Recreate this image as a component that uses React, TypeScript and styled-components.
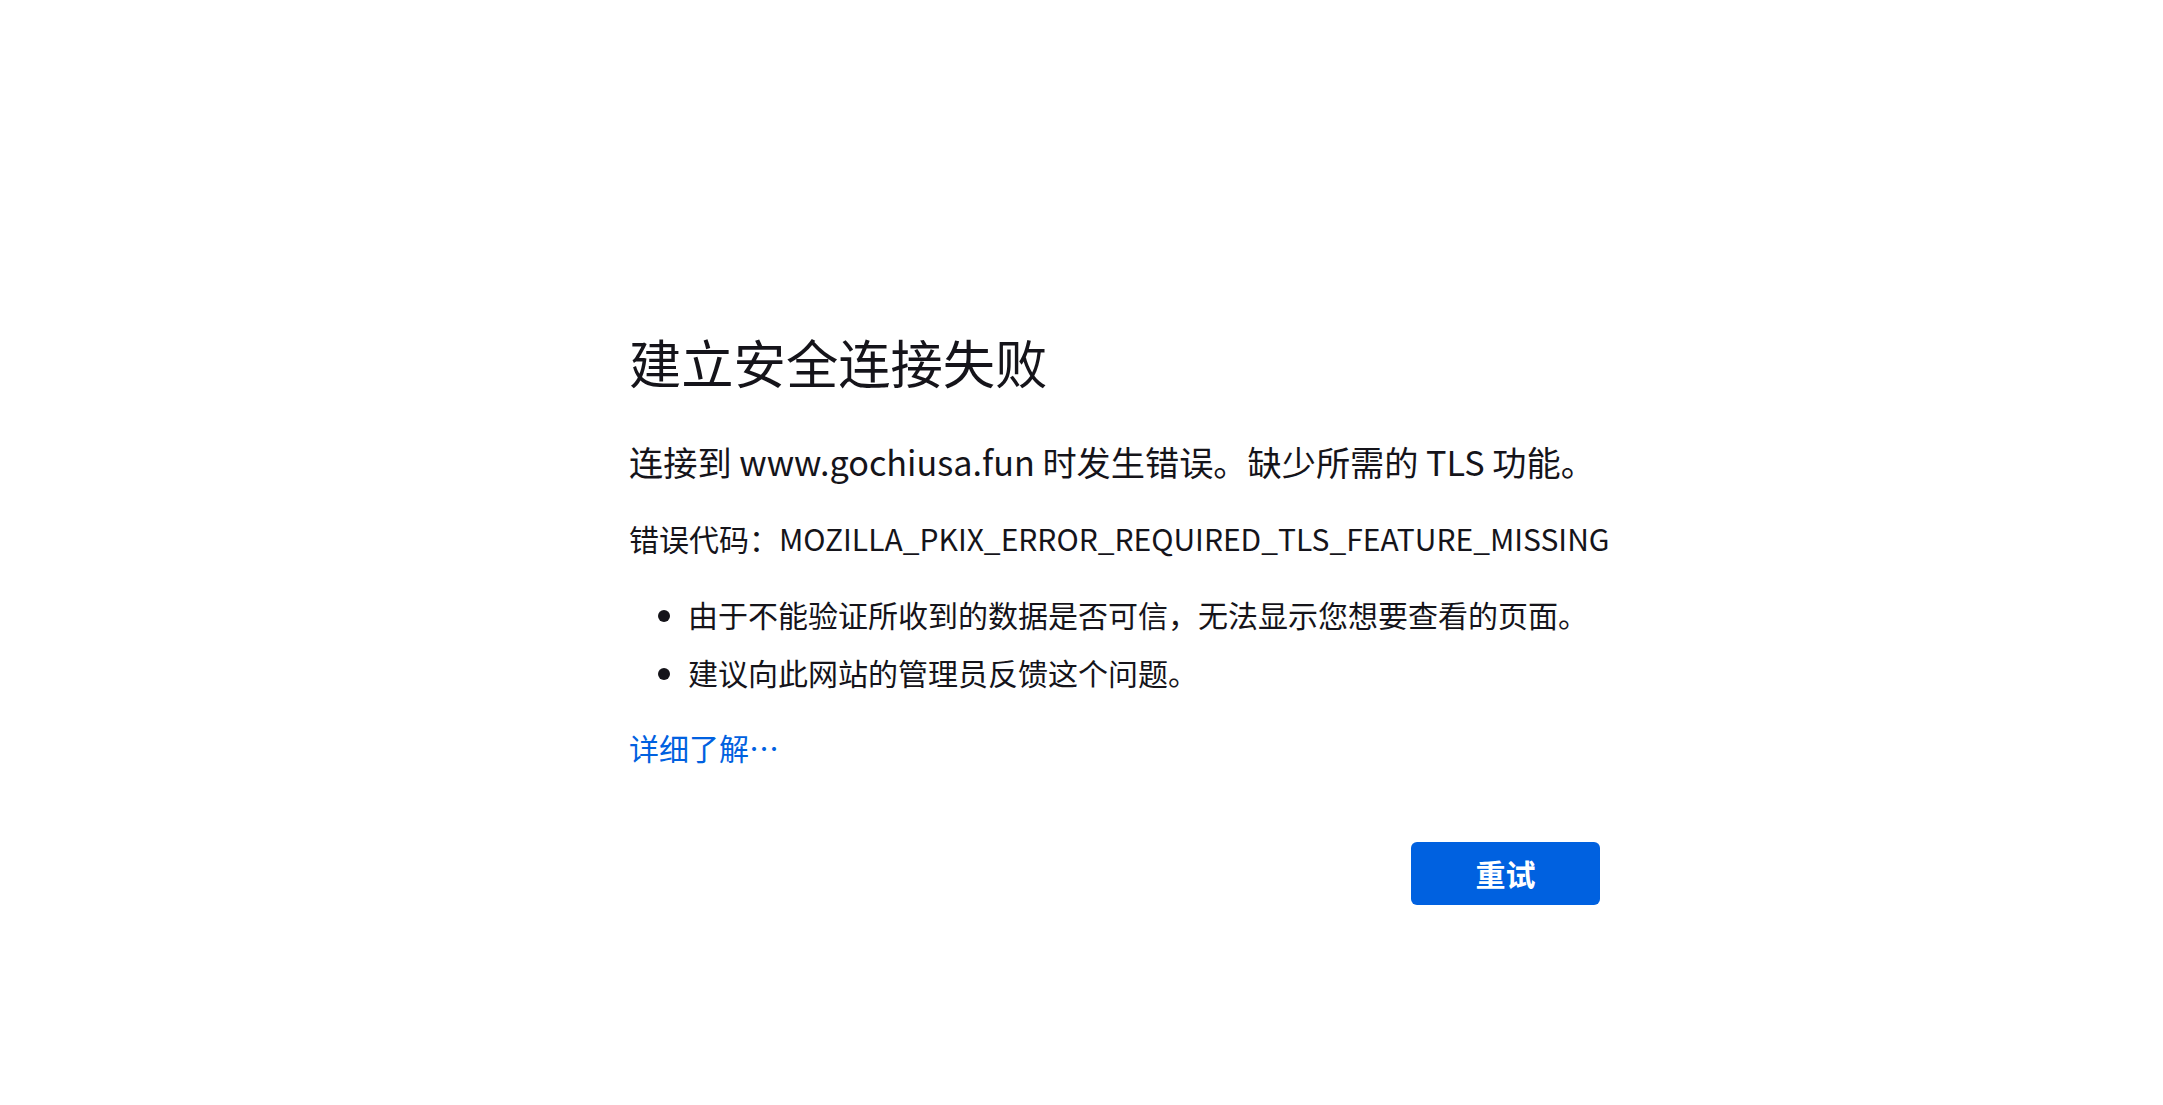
import React from "react";
import styled, { createGlobalStyle } from "styled-components";

const Global = createGlobalStyle`
  html, body {
    margin: 0;
    padding: 0;
    background: #ffffff;
  }
  body {
    font-family: "Noto Sans CJK SC", "Noto Sans", sans-serif;
    color: #15141a;
  }
`;

const Page = styled.div`
  display: flex;
  justify-content: center;
  padding-top: 330px;
  min-height: 1105px;
  box-sizing: border-box;
`;

const Container = styled.main`
  width: 1037px;
  padding-left: 66px;
  box-sizing: border-box;
  display: flex;
  flex-direction: column;
`;

const Title = styled.h1`
  margin: 0;
  font-size: 52.3px;
  line-height: 62px;
  font-weight: 400;
  color: #15141a;
`;

const Intro = styled.p`
  margin: 43px 0 0;
  font-size: 34.2px;
  line-height: 52px;
  white-space: nowrap;
`;

const Code = styled.p`
  margin: 29px 0 0;
  font-size: 30px;
  line-height: 45px;
  white-space: nowrap;
`;

const List = styled.ul`
  margin: 31px 0 0;
  padding-left: 59px;
  display: flex;
  flex-direction: column;
  gap: 13px;
`;

const Item = styled.li`
  font-size: 30px;
  line-height: 45px;
  white-space: nowrap;
`;

const Link = styled.a`
  margin-top: 29.5px;
  font-size: 30px;
  line-height: 45px;
  color: #0061e0;
  text-decoration: none;
  align-self: flex-start;
  cursor: pointer;
`;

const Actions = styled.div`
  display: flex;
  justify-content: flex-end;
  margin-top: 72px;
`;

const Button = styled.button`
  width: 189px;
  height: 63px;
  border: none;
  border-radius: 6px;
  background: #0061e0;
  color: #ffffff;
  font-family: "Noto Sans CJK SC", "Noto Sans", sans-serif;
  font-size: 30px;
  font-weight: 700;
  display: flex;
  align-items: center;
  justify-content: center;
  padding: 0;
  cursor: pointer;
`;

export default function App() {
  return (
    <>
      <Global />
      <Page>
        <Container>
          <Title>建立安全连接失败</Title>
          <Intro>连接到 www.gochiusa.fun 时发生错误。缺少所需的 TLS 功能。</Intro>
          <Code>错误代码：MOZILLA_PKIX_ERROR_REQUIRED_TLS_FEATURE_MISSING</Code>
          <List>
            <Item>由于不能验证所收到的数据是否可信，无法显示您想要查看的页面。</Item>
            <Item>建议向此网站的管理员反馈这个问题。</Item>
          </List>
          <Link>详细了解…</Link>
          <Actions>
            <Button>重试</Button>
          </Actions>
        </Container>
      </Page>
    </>
  );
}
